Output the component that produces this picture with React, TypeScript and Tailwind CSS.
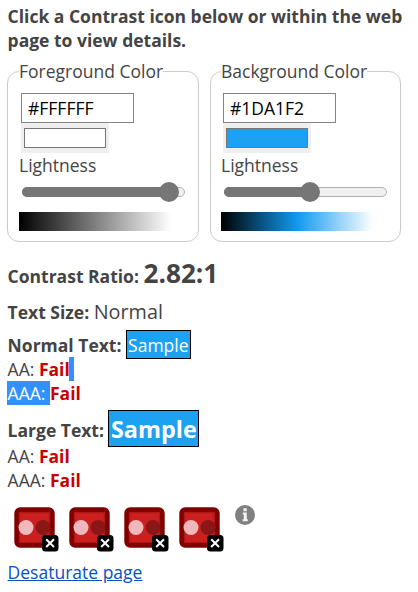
type PanelProps = {
  label: string;
  value: string;
  swatch: string;
  fill: string;
  gradient: string;
  size: string;
};

function ColorPanel({ label, value, swatch, fill, gradient, size }: PanelProps) {
  return (
    <fieldset className={`h-[183px] rounded-[12px] border border-[#ccc] ${size}`}>
      <legend className="h-6 whitespace-nowrap leading-6">{label}</legend>
      <div className="ml-[2px] mt-[10px] flex h-[30px] w-[113px] items-center border border-[#858585] bg-white pl-[6px] text-black">
        {value}
      </div>
      <div className="ml-[2px] h-[30px] w-[88px] bg-[#efefef] pl-[3px] pt-[5px]">
        <div className={`h-5 w-[82px] border border-[#767676] ${swatch}`} />
      </div>
      <div className="h-6 leading-6">Lightness</div>
      <div className="ml-[3px] mt-[10px] flex h-[10px] w-[163px] items-center rounded-full border border-[#b2b2b2] bg-[#efefef]">
        <div className={`-ml-px h-[10px] shrink-0 rounded-l-full bg-[#767676] ${fill}`} />
        <div className="-ml-[10px] size-5 shrink-0 rounded-full bg-[#767676]" />
      </div>
      <div className={`mt-[15px] h-[19px] w-[152px] ${gradient}`} />
    </fieldset>
  );
}

function ContrastIcon() {
  return (
    <svg width="46" height="46" viewBox="0 0 46 46">
      <rect x="2.6" y="2.6" width="35.8" height="35.8" rx="3.5" fill="#cc2020" stroke="#800000" strokeWidth="4.6" />
      <rect x="5.6" y="5.6" width="29.8" height="29.8" fill="none" stroke="#b01818" strokeWidth="1.4" />
      <circle cx="12" cy="20.5" r="7.5" fill="#efb9bc" />
      <circle cx="29" cy="20.5" r="7.5" fill="#8c1515" />
      <rect x="28" y="28" width="16.5" height="16.5" rx="3.5" fill="#000" />
      <path d="M32.2 32.2 L40 40 M40 32.2 L32.2 40" stroke="#fff" strokeWidth="2" />
    </svg>
  );
}

function Result({ level }: { level: string }) {
  return (
    <div className="h-6">
      {level}: <b className="text-[#c80000]">Fail</b>
    </div>
  );
}

export default function App() {
  return (
    <main className="h-[592px] w-[418px] overflow-hidden bg-white pl-[7px] pt-1 font-['Open_Sans',sans-serif] text-[17.5px] leading-6 text-[#444]">
      <h1 className="h-[55px] whitespace-nowrap pl-[0.6px] font-bold">
        Click a Contrast icon below or within the web
        <br />
        page to view details.
      </h1>
      <div className="flex gap-[11px]">
        <ColorPanel
          label="Foreground Color"
          value="#FFFFFF"
          swatch="bg-white"
          fill="w-[147px]"
          gradient="bg-[linear-gradient(to_right,#000,#fff)]"
          size="w-[192px] pl-[11px]"
        />
        <ColorPanel
          label="Background Color"
          value="#1DA1F2"
          swatch="bg-[#1da1f2]"
          fill="w-[86px]"
          gradient="bg-[linear-gradient(to_right,#000,#0f9af0_50%,#fff)]"
          size="w-[191px] pl-[10px]"
        />
      </div>
      <div className="mt-[13px] h-9 whitespace-nowrap pl-[0.6px] leading-9">
        <b>Contrast Ratio: </b>
        <b className="text-[26.2px]">2.82:1</b>
      </div>
      <div className="mt-[9px] h-6 pl-[0.6px]">
        <b>Text Size: </b>
        <span className="text-[19.8px]">Normal</span>
      </div>
      <div className="mt-[6px] flex h-7 items-center pl-[0.6px]">
        <b className="mt-[2px]">Normal Text:</b>
        <span className="ml-[4.4px] flex h-[29px] w-[65px] items-center justify-center border border-black bg-[#1da1f2] pt-px text-white">
          Sample
        </span>
      </div>
      <div className="-mt-px h-6 whitespace-nowrap pl-[0.6px]">
        AA: <b className="text-[#c80000]">Fail</b>
        <span className="-ml-[0.6px] inline-block h-6 w-[5px] bg-[#3390ff] align-top" />
      </div>
      <div className="h-6 whitespace-nowrap">
        <span className="inline-block h-6 w-[43px] whitespace-pre bg-[#3390ff] pl-[0.6px] align-top text-white">AAA: </span>
        <b className="text-[#c80000]">Fail</b>
      </div>
      <div className="mt-[5px] flex h-[37px] items-center pl-[0.6px]">
        <b className="mt-[2px]">Large Text:</b>
        <b className="ml-[4.4px] flex h-[37px] w-[91px] items-center justify-center border border-black bg-[#1da1f2] text-[23.4px] text-white">
          Sample
        </b>
      </div>
      <div className="-mt-[3px] pl-[0.6px]">
        <Result level="AA" />
        <Result level="AAA" />
      </div>
      <div className="ml-[7px] mt-[15px] flex h-[46px] gap-[9px]">
        <ContrastIcon />
        <ContrastIcon />
        <ContrastIcon />
        <ContrastIcon />
        <svg width="22" height="22" viewBox="0 0 22 22" className="-mt-[3px]">
          <circle cx="11" cy="11" r="10" fill="#808080" />
          <path d="M9.5 4.2h3.2v3.1H9.5zM8.8 8.6h4v6.6h1v2H8.6v-2h1.2v-4.6h-1z" fill="#f3f3f3" />
        </svg>
      </div>
      <a className="ml-[0.6px] mt-[7px] inline-block text-[#0a4fc4] underline">Desaturate page</a>
    </main>
  );
}
